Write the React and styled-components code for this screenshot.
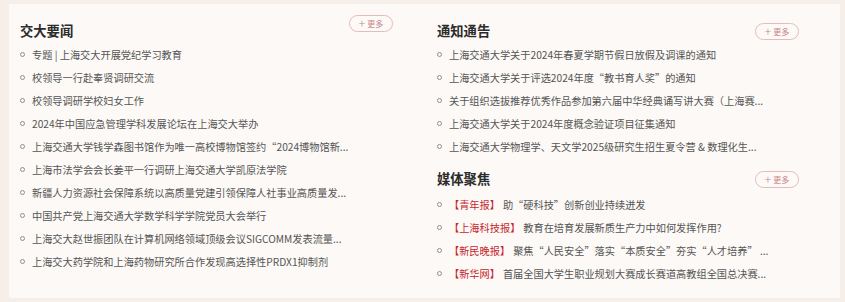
import styled, { createGlobalStyle } from "styled-components";

const GlobalStyle = createGlobalStyle`
  html, body {
    margin: 0;
    padding: 0;
    background: #f6eee8;
  }
  body {
    font-family: "Noto Sans CJK SC", "Noto Sans", sans-serif;
  }
`;

// titles come already shortened by the site, "..." included
const news = [
  "专题 | 上海交大开展党纪学习教育",
  "校领导一行赴奉贤调研交流",
  "校领导调研学校妇女工作",
  "2024年中国应急管理学科发展论坛在上海交大举办",
  "上海交通大学钱学森图书馆作为唯一高校博物馆签约“2024博物馆新...",
  "上海市法学会会长姜平一行调研上海交通大学凯原法学院",
  "新疆人力资源社会保障系统以高质量党建引领保障人社事业高质量发...",
  "中国共产党上海交通大学数学科学学院党员大会举行",
  "上海交大赵世振团队在计算机网络领域顶级会议SIGCOMM发表流量...",
  "上海交大药学院和上海药物研究所合作发现高选择性PRDX1抑制剂",
];

const notices = [
  "上海交通大学关于2024年春夏学期节假日放假及调课的通知",
  "上海交通大学关于评选2024年度“教书育人奖”的通知",
  "关于组织选拔推荐优秀作品参加第六届中华经典诵写讲大赛（上海赛...",
  "上海交通大学关于2024年度概念验证项目征集通知",
  "上海交通大学物理学、天文学2025级研究生招生夏令营 & 数理化生...",
];

const media = [
  { src: "青年报", title: "助“硬科技”创新创业持续迸发" },
  { src: "上海科技报", title: "教育在培育发展新质生产力中如何发挥作用?" },
  { src: "新民晚报", title: "聚焦“人民安全”落实“本质安全”夯实“人才培养” ..." },
  { src: "新华网", title: "首届全国大学生职业规划大赛成长赛道高教组全国总决赛..." },
];

function More({ raised }) {
  return (
    <MoreButton $raised={raised}>
      <span className="plus">+</span>
      <span>更多</span>
    </MoreButton>
  );
}

function App() {
  return (
    <>
      <GlobalStyle />
      <Page>
        <Card>
          <Column>
            <Header>
              <Title>交大要闻</Title>
              <More raised />
            </Header>
            <List>
              {news.map((t) => (
                <Item key={t}>{t}</Item>
              ))}
            </List>
          </Column>
          <Column>
            <Header>
              <Title>通知通告</Title>
              <More />
            </Header>
            <List>
              {notices.map((t) => (
                <Item key={t}>{t}</Item>
              ))}
            </List>
            <Header $gap={9}>
              <Title>媒体聚焦</Title>
              <More />
            </Header>
            <List $gap={2}>
              {media.map((m) => (
                <Item key={m.src}>
                  <Source>【{m.src}】</Source>
                  {m.title}
                </Item>
              ))}
            </List>
          </Column>
        </Card>
      </Page>
    </>
  );
}

const Page = styled.div`
  width: 845px;
  height: 302px;
  padding: 4px 5px 4px 9px;
  box-sizing: border-box;
  display: flex;
`;

const Card = styled.div`
  flex: 1;
  background: #fcf9f6;
  padding: 7px 0 0 11px;
  display: grid;
  grid-template-columns: 373px 362px;
  column-gap: 44px;
  align-items: start;
`;

const Column = styled.div`
  display: flex;
  flex-direction: column;
`;

const Header = styled.div`
  height: 24px;
  margin-top: ${(p) => (p.$gap != null ? p.$gap : 8)}px;
  display: flex;
  align-items: center;
  justify-content: space-between;
`;

const Title = styled.h2`
  margin: 0;
  font-size: 13.3px;
  line-height: 24px;
  font-weight: 700;
  color: #2b2b2b;
`;

const MoreButton = styled.div`
  width: 44px;
  height: 17px;
  box-sizing: border-box;
  border: 1px solid #e3bcbf;
  border-radius: 9px;
  display: flex;
  align-items: center;
  justify-content: center;
  gap: 2px;
  font-size: 8px;
  color: #c8878d;
  align-self: ${(p) => (p.$raised ? "flex-start" : "center")};
  margin-top: ${(p) => (p.$raised ? "-4px" : "0")};
  .plus {
    font-size: 12px;
    font-weight: 300;
    line-height: 1;
    margin-top: -1px;
  }
`;

const List = styled.ul`
  list-style: none;
  margin: ${(p) => p.$gap || 0}px 0 0;
  padding: 0;
`;

const Item = styled.li`
  position: relative;
  height: 23px;
  line-height: 23px;
  padding-left: 12px;
  font-size: 10.2px;
  color: #555;
  white-space: nowrap;
  &::before {
    content: "";
    position: absolute;
    left: 0;
    top: 9px;
    width: 5px;
    height: 5px;
    box-sizing: border-box;
    border: 1px solid #8f8f8f;
    border-radius: 50%;
  }
`;

const Source = styled.span`
  color: #c6262e;
  margin-right: 3px;
`;

export default App;
